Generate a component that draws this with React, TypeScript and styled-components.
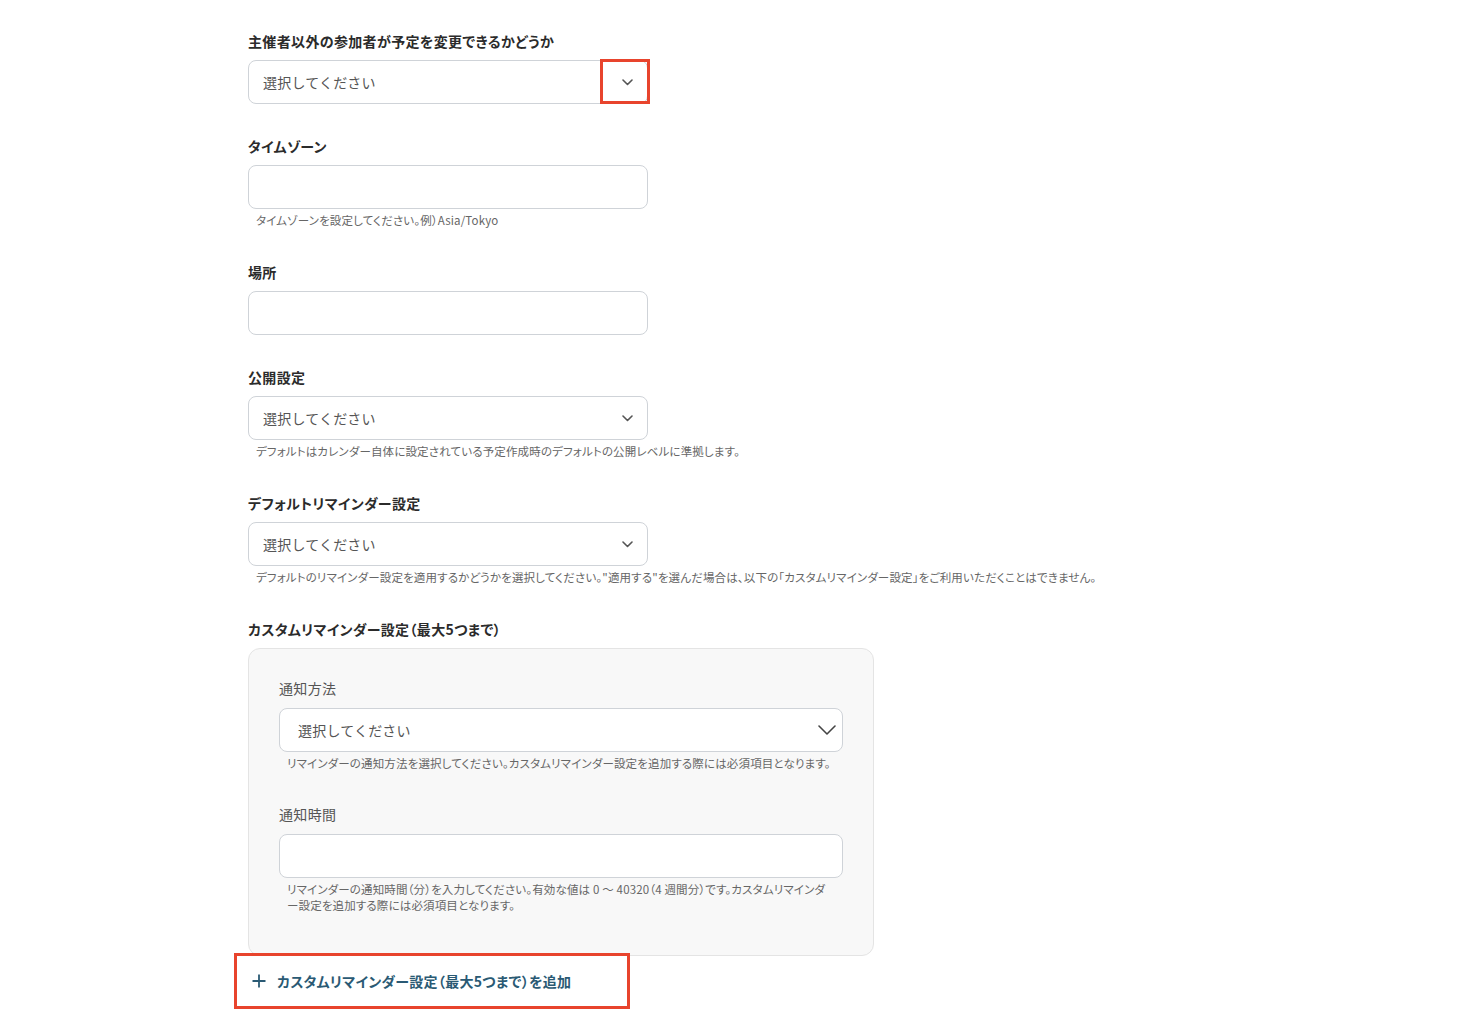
import React from "react";
import styled, { createGlobalStyle } from "styled-components";

const Global = createGlobalStyle`
  html, body { margin: 0; padding: 0; background: #ffffff; }
  body {
    font-family: "Noto Sans CJK JP", "Noto Sans", sans-serif;
    color: #333333;
  }
`;

const Page = styled.div`
  padding: 31px 0 40px 248px;
  display: flex;
  flex-direction: column;
  align-items: flex-start;
`;

const Field = styled.div<{ $width?: number }>`
  display: flex;
  flex-direction: column;
  width: ${(p) => p.$width ?? 400}px;
  margin-bottom: 32px;
`;

const Label = styled.div<{ $sub?: boolean }>`
  font-size: 14px;
  line-height: 20px;
  font-weight: ${(p) => (p.$sub ? 400 : 700)};
  color: ${(p) => (p.$sub ? "#555555" : "#2b2b2b")};
  font-feature-settings: "palt";
  letter-spacing: 0.35px;
  margin-bottom: ${(p) => (p.$sub ? 10 : 9)}px;
  white-space: nowrap;
`;

const Box = styled.div`
  position: relative;
  box-sizing: border-box;
  height: 44px;
  width: 100%;
  background: #ffffff;
  border: 1px solid #cfd3d8;
  border-radius: 8px;
  display: flex;
  align-items: center;
  justify-content: space-between;
`;

const Placeholder = styled.span<{ $pad?: number }>`
  padding-left: ${(p) => p.$pad ?? 14}px;
  font-size: 14px;
  color: #555555;
  letter-spacing: 0.2px;
`;

const ChevronWrap = styled.span<{ $right?: number }>`
  display: flex;
  align-items: center;
  padding-right: ${(p) => p.$right ?? 14}px;
  color: #555555;
`;

const Help = styled.div`
  margin-top: 3px;
  margin-bottom: 2px;
  padding: 0 8px;
  font-size: 11.5px;
  line-height: 16px;
  color: #666666;
  letter-spacing: 0.15px;
  font-feature-settings: "palt";
`;

const HelpNowrap = styled(Help)`
  white-space: nowrap;
`;

const Highlight = styled.div`
  position: absolute;
  top: -2px;
  right: -3px;
  width: 50px;
  height: 45px;
  box-sizing: border-box;
  border: 3px solid #e8442d;
  pointer-events: none;
`;

const Panel = styled.div`
  box-sizing: border-box;
  width: 626px;
  background: #f8f8f8;
  border: 1px solid #e4e4e4;
  border-radius: 12px;
  padding: 29px 30px 40px 30px;
  display: flex;
  flex-direction: column;
`;

const PanelField = styled.div<{ $last?: boolean }>`
  display: flex;
  flex-direction: column;
  margin-bottom: ${(p) => (p.$last ? 0 : 31)}px;
`;

const CustomField = styled.div`
  display: flex;
  flex-direction: column;
`;

const AddFrame = styled.div`
  box-sizing: border-box;
  margin: -3px 0 0 -14px;
  width: 396px;
  height: 56px;
  border: 3px solid #e8442d;
  display: flex;
  align-items: center;
  padding-left: 14px;
`;

const AddButton = styled.button`
  display: flex;
  align-items: center;
  gap: 11px;
  background: none;
  border: none;
  padding: 0 0 0 1px;
  cursor: pointer;
  font-family: inherit;
  font-size: 14px;
  font-weight: 700;
  letter-spacing: 0.3px;
  color: #2a5a74;
  font-feature-settings: "palt";
`;

const SmallChevron = () => (
  <svg width="11" height="7" viewBox="0 0 11 7" fill="none">
    <path d="M1 1l4.5 4.5L10 1" stroke="currentColor" strokeWidth="1.6" strokeLinecap="round" strokeLinejoin="round" />
  </svg>
);

const BigChevron = () => (
  <svg width="18" height="10" viewBox="0 0 18 10" fill="none">
    <path d="M1 1l8 8 8-8" stroke="#444" strokeWidth="1.6" strokeLinecap="round" strokeLinejoin="round" />
  </svg>
);

const Plus = () => (
  <svg width="14" height="14" viewBox="0 0 14 14" fill="none">
    <path d="M7 0.5v13M0.5 7h13" stroke="#2a5a74" strokeWidth="1.8" />
  </svg>
);

const SelectBox: React.FC<{ highlight?: boolean }> = ({ highlight }) => (
  <Box>
    <Placeholder>選択してください</Placeholder>
    <ChevronWrap>
      <SmallChevron />
    </ChevronWrap>
    {highlight && <Highlight />}
  </Box>
);

export default function App() {
  return (
    <>
      <Global />
      <Page>
        <Field>
          <Label>主催者以外の参加者が予定を変更できるかどうか</Label>
          <SelectBox highlight />
        </Field>

        <Field>
          <Label>タイムゾーン</Label>
          <Box />
          <HelpNowrap>タイムゾーンを設定してください。例）Asia/Tokyo</HelpNowrap>
        </Field>

        <Field>
          <Label>場所</Label>
          <Box />
        </Field>

        <Field>
          <Label>公開設定</Label>
          <SelectBox />
          <HelpNowrap>デフォルトはカレンダー自体に設定されている予定作成時のデフォルトの公開レベルに準拠します。</HelpNowrap>
        </Field>

        <Field>
          <Label>デフォルトリマインダー設定</Label>
          <SelectBox />
          <HelpNowrap>
            デフォルトのリマインダー設定を適用するかどうかを選択してください。"適用する"を選んだ場合は、以下の「カスタムリマインダー設定」をご利用いただくことはできません。
          </HelpNowrap>
        </Field>

        <CustomField>
          <Label>カスタムリマインダー設定（最大5つまで）</Label>
          <Panel>
            <PanelField>
              <Label $sub>通知方法</Label>
              <Box>
                <Placeholder $pad={18}>選択してください</Placeholder>
                <ChevronWrap $right={6}>
                  <BigChevron />
                </ChevronWrap>
              </Box>
              <Help>リマインダーの通知方法を選択してください。カスタムリマインダー設定を追加する際には必須項目となります。</Help>
            </PanelField>
            <PanelField $last>
              <Label $sub>通知時間</Label>
              <Box />
              <Help>
                リマインダーの通知時間（分）を入力してください。有効な値は 0 ～ 40320（4 週間分）です。カスタムリマインダー設定を追加する際には必須項目となります。
              </Help>
            </PanelField>
          </Panel>
        </CustomField>

        <AddFrame>
          <AddButton>
            <Plus />
            <span>カスタムリマインダー設定（最大5つまで）を追加</span>
          </AddButton>
        </AddFrame>
      </Page>
    </>
  );
}
